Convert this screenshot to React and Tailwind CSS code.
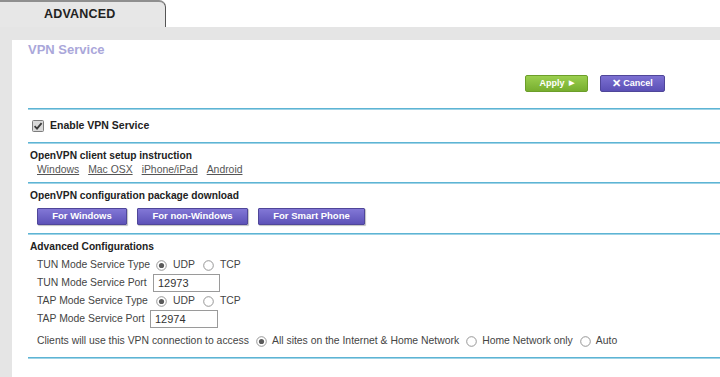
import React from 'react'

function Rule() {
  return <div className="h-[2px] bg-[#5db4d4] border-b border-[#9fd3e6]" />
}

function Radio({ checked }) {
  return (
    <svg width="11" height="11" viewBox="0 0 11 11" className="shrink-0">
      <circle cx="5.5" cy="5.5" r="4.8" fill="#fff" stroke="#8a8a8a" strokeWidth="0.9" />
      {checked && <circle cx="5.5" cy="5.5" r="2.6" fill="#5a5a5a" />}
    </svg>
  )
}

function Check() {
  return (
    <svg width="12" height="12" viewBox="0 0 12 12" className="shrink-0">
      <rect x="0.5" y="0.5" width="11" height="11" rx="1" fill="#d9d9d9" stroke="#7d7d7d" />
      <path d="M2.6 6.2 L5 8.6 L9.6 3.2" fill="none" stroke="#3a3a3a" strokeWidth="1.8" />
    </svg>
  )
}

function PurpleBtn({ children, w }) {
  return (
    <div
      className={`${w} h-[17px] flex items-center justify-center text-[9.5px] font-bold text-white bg-gradient-to-b from-[#8277d6] to-[#5d52b8] border border-[#4f4699] rounded-[1px] shadow-[1px_1px_1px_rgba(0,0,0,0.25)]`}
    >
      {children}
    </div>
  )
}

export default function App() {
  return (
    <div className="w-[720px] h-[377px] overflow-hidden bg-white text-[#333] font-['Liberation_Sans',Arial,sans-serif]">
      {/* tab strip */}
      <div className="h-[27px] flex bg-white">
        <div className="w-[166px] bg-[#e7e7e7] border-t-2 border-[#8f8f8f] border-r border-r-[#555] rounded-tr-[7px] flex items-center pl-[44px] text-[12.5px] tracking-[0.2px] font-bold text-[#222]">
          ADVANCED
        </div>
      </div>
      <div className="h-[13px] bg-[#e5e5e5]" />

      <div className="flex h-[337px]">
        <div className="w-[12px] bg-[#e5e5e5]" />
        <div className="flex-1 bg-white pl-[16px]">
          <div className="text-[13px] font-bold leading-[16px] pt-[2px] text-[#aaa7da]">VPN Service</div>

          <div className="flex justify-end gap-[12px] pr-[55px] mt-[17px]">
            <div className="w-[63px] h-[17px] flex items-center justify-center gap-[4px] text-[9px] font-bold text-white bg-gradient-to-b from-[#9bcf4e] to-[#77ae2f] border border-[#6c9e2a] rounded-[2px]">
              Apply <span className="text-[7px]">▶</span>
            </div>
            <div className="w-[65px] h-[17px] flex items-center justify-center gap-[2px] text-[9px] font-bold text-white bg-gradient-to-b from-[#7c70d2] to-[#5b50b6] border border-[#4f4699] rounded-[2px]">
              <span className="text-[11px] leading-none">✕</span>Cancel
            </div>
          </div>

          <div className="mt-[16px]">
            <Rule />
          </div>

          <div className="h-[32px] flex items-center gap-[6px] pl-[4px] text-[10.5px] font-bold text-[#222]">
            <Check />
            Enable VPN Service
          </div>
          <Rule />

          {/* client setup */}
          <div className="pt-[5px] pb-[5px] pl-[2px]">
            <div className="text-[10.2px] font-bold leading-[14px] text-[#222]">OpenVPN client setup instruction</div>
            <div className="flex gap-[9px] pl-[7px] text-[10.4px] leading-[14px] text-[#555] underline">
              <span>Windows</span>
              <span>Mac OSX</span>
              <span>iPhone/iPad</span>
              <span>Android</span>
            </div>
          </div>
          <Rule />

          {/* download */}
          <div className="pt-[5px] pb-[8px] pl-[2px]">
            <div className="text-[10.2px] font-bold leading-[14px] text-[#222]">OpenVPN configuration package download</div>
            <div className="flex gap-[10px] pl-[7px] mt-[5px]">
              <PurpleBtn w="w-[90px]">For Windows</PurpleBtn>
              <PurpleBtn w="w-[111px]">For non-Windows</PurpleBtn>
              <PurpleBtn w="w-[107px]">For Smart Phone</PurpleBtn>
            </div>
          </div>
          <Rule />

          {/* advanced */}
          <div className="pt-[5px] pb-[7px] pl-[2px] text-[10.4px] text-[#444]">
            <div className="font-bold text-[10.2px] leading-[14px] text-[#222]">Advanced Configurations</div>
            <div className="pl-[7px]">
              <div className="h-[18px] mt-[2px] flex items-center">
                <span className="w-[119px]">TUN Mode Service Type</span>
                <Radio checked />
                <span className="ml-[6px]">UDP</span>
                <span className="ml-[8px]"><Radio /></span>
                <span className="ml-[6px]">TCP</span>
              </div>
              <div className="h-[18px] flex items-center">
                <span className="w-[116px]">TUN Mode Service Port</span>
                <div className="w-[67px] h-[18px] border border-[#9a9a9a] flex items-center pl-[4px] text-[11px] text-[#333]">12973</div>
              </div>
              <div className="h-[18px] flex items-center">
                <span className="w-[119px]">TAP Mode Service Type</span>
                <Radio checked />
                <span className="ml-[6px]">UDP</span>
                <span className="ml-[8px]"><Radio /></span>
                <span className="ml-[6px]">TCP</span>
              </div>
              <div className="h-[18px] flex items-center">
                <span className="w-[113px]">TAP Mode Service Port</span>
                <div className="w-[68px] h-[18px] border border-[#9a9a9a] flex items-center pl-[4px] text-[11px] text-[#333]">12974</div>
              </div>
              <div className="h-[18px] mt-[4px] flex items-center">
                <span className="w-[219px]">Clients will use this VPN connection to access</span>
                <Radio checked />
                <span className="ml-[5px]">All sites on the Internet &amp; Home Network</span>
                <span className="ml-[7px]"><Radio /></span>
                <span className="ml-[5px]">Home Network only</span>
                <span className="ml-[7px]"><Radio /></span>
                <span className="ml-[5px]">Auto</span>
              </div>
            </div>
          </div>
          <Rule />
        </div>
      </div>
    </div>
  )
}
